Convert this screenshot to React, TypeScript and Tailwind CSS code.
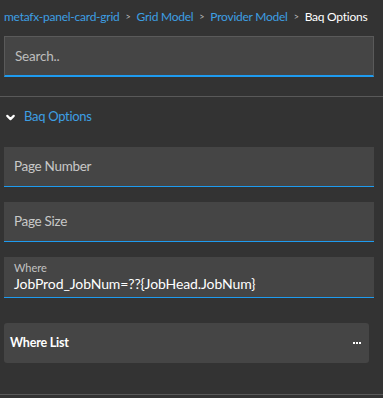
import { ChevronDown } from "lucide-react";

const crumbs = ["metafx-panel-card-grid", "Grid Model", "Provider Model"] as const;

export default function App() {
  return (
    <main
      className="h-[398px] w-[383px] overflow-hidden bg-[#333333] text-white"
      style={{ fontFamily: "Lato, 'Open Sans', sans-serif" }}
    >
      <nav className="flex h-[32px] items-center gap-[6px] whitespace-nowrap px-[4px] pt-[1px] text-[12px] tracking-[-0.25px]">
        {crumbs.map((c) => (
          <span key={c} className="flex items-center gap-[6px]">
            <span className="text-[#3d9fe3]">{c}</span>
            <span className="text-[9px] text-[#bdbdbd]">&gt;</span>
          </span>
        ))}
        <span className="text-white">Baq Options</span>
      </nav>

      <div className="px-[4px] pt-[4px]">
        <div className="flex h-[41px] w-[370px] items-center border border-b-2 border-[#5a5a5a] border-b-[#1e9bef] bg-[#454545] px-[10px] text-[13.5px] tracking-[-0.2px] text-[#bdbdbd]">
          Search..
        </div>
      </div>

      <div className="mt-[19px] h-px bg-[#595959]" />

      <div className="flex h-[40px] items-center gap-[7px] px-[4px] text-[13px] tracking-[-0.3px] text-[#3d9fe3]">
        <ChevronDown className="size-[13px] text-white" strokeWidth={4} aria-hidden="true" />
        Baq Options
      </div>

      <div className="flex flex-col gap-[15px] px-[4px] pt-[10px]">
        <Field label="Page Number" />
        <Field label="Page Size" />
        <div className="flex h-[41px] w-[370px] flex-col justify-center border-b border-[#1e9bef] bg-[#454545] px-[10px]">
          <span className="text-[11px] leading-[14px] text-[#c2c2c2]">Where</span>
          <span className="text-[14px] leading-[18px] tracking-[-0.1px] text-white">JobProd_JobNum=??{"{JobHead.JobNum}"}</span>
        </div>
        <div className="mt-[10px] flex h-[40px] w-[365px] items-center justify-between rounded-[3px] bg-[#454545] pl-[6px] pr-[8px]">
          <span className="text-[12.5px] font-bold tracking-[-0.2px]">Where List</span>
          <span className="flex gap-px">
            <span className="size-[2px] bg-white" />
            <span className="size-[2px] bg-white" />
            <span className="size-[2px] bg-white" />
          </span>
        </div>
      </div>

      <div className="mt-[31px] h-px bg-[#595959]" />
    </main>
  );
}

function Field({ label }: { label: string }) {
  return (
    <div className="flex h-[40px] w-[370px] items-center border-b border-[#1e9bef] bg-[#454545] px-[10px] text-[13.5px] tracking-[-0.3px] text-[#c8c8c8]">
      {label}
    </div>
  );
}
